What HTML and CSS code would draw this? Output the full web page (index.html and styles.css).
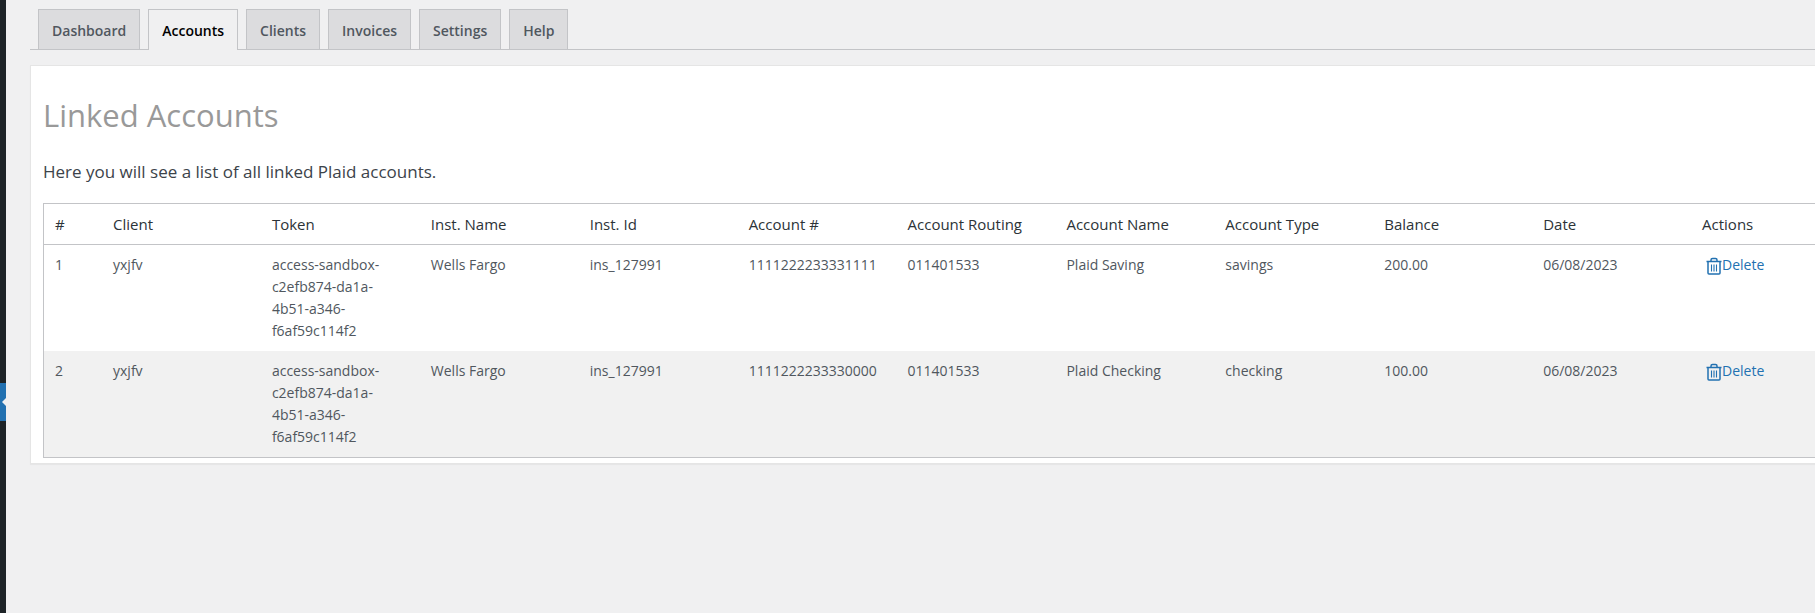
FILE: index.html
```html
<!DOCTYPE html>
<html lang="en">
<head>
<meta charset="utf-8">
<title>Linked Accounts</title>
<link rel="stylesheet" href="styles.css">
</head>
<body>
<svg class="sprite" aria-hidden="true">
  <symbol id="trash" viewBox="0 0 16 18">
    <path d="M0.5 4.5h15M5 4.5V3q0-1.500 1.500-1.500h3q1.500 0 1.500 1.500v1.500M2 4.500V16q0 1 1 1h10q1 0 1-1V4.500" fill="none" stroke="currentColor" stroke-width="1.500"/>
    <path d="M5.500 7.500v7M8 7.500v7M10.500 7.500v7" fill="none" stroke="currentColor" stroke-width="1.100"/>
  </symbol>
</svg>
<div class="app">
  <aside class="menu"><div class="menu-current"></div></aside>
  <main class="content">
    <nav class="tabs">
      <a class="tab" href="#">Dashboard</a>
      <a class="tab tab-active" href="#" aria-current="page">Accounts</a>
      <a class="tab" href="#">Clients</a>
      <a class="tab" href="#">Invoices</a>
      <a class="tab" href="#">Settings</a>
      <a class="tab" href="#">Help</a>
    </nav>
    <section class="panel">
      <h1 class="title">Linked Accounts</h1>
      <p class="intro">Here you will see a list of all linked Plaid accounts.</p>
      <table class="accounts">
        <thead>
          <tr>
            <th class="col-num">#</th><th>Client</th><th>Token</th><th>Inst. Name</th><th>Inst. Id</th><th>Account #</th><th>Account Routing</th><th>Account Name</th><th>Account Type</th><th>Balance</th><th>Date</th><th>Actions</th>
          </tr>
        </thead>
        <tbody>
          <tr>
            <td>1</td><td>yxjfv</td><td>access-sandbox-c2efb874-da1a-4b51-a346-f6af59c114f2</td><td>Wells Fargo</td><td>ins_127991</td><td>1111222233331111</td><td>011401533</td><td>Plaid Saving</td><td>savings</td><td>200.00</td><td>06/08/2023</td>
            <td><a class="delete" href="#"><svg class="icon" aria-hidden="true"><use href="#trash"/></svg>Delete</a></td>
          </tr>
          <tr>
            <td>2</td><td>yxjfv</td><td>access-sandbox-c2efb874-da1a-4b51-a346-f6af59c114f2</td><td>Wells Fargo</td><td>ins_127991</td><td>1111222233330000</td><td>011401533</td><td>Plaid Checking</td><td>checking</td><td>100.00</td><td>06/08/2023</td>
            <td><a class="delete" href="#"><svg class="icon" aria-hidden="true"><use href="#trash"/></svg>Delete</a></td>
          </tr>
        </tbody>
      </table>
    </section>
  </main>
</div>
</body>
</html>
```
FILE: styles.css
```css
* { box-sizing: border-box; }
body {
  margin: 0;
  background: #f0f0f1;
  color: #3c434a;
  font: 14px/22px "Segoe UI", "Open Sans", "Noto Sans", sans-serif;
  overflow-x: hidden;
}
.sprite { display: none; }
.app { display: flex; min-height: 100vh; }
.menu { flex: none; width: 6px; padding-top: 383px; background: #1d2327; }
.menu-current {
  display: flex;
  align-items: center;
  justify-content: flex-end;
  height: 38px;
  background: #2271b1;
}
.menu-current::after {
  content: "";
  border: 4px solid transparent;
  border-left-width: 0;
  border-right-color: #f0f0f1;
}
/* the content area is wider than the window and runs past its right edge */
.content { flex: 1; min-width: 0; margin: 0 -49px 0 24px; }
.tabs {
  display: flex;
  gap: 8px;
  padding: 9px 8px 0;
  border-bottom: 1px solid #c3c4c7;
}
.tab {
  padding: 9px 13px 7px;
  border: 1px solid #c3c4c7;
  border-bottom: 0;
  background: #dcdcde;
  color: #50575e;
  font-weight: 600;
  line-height: 23px;
  text-decoration: none;
}
.tab-active {
  margin-bottom: -1px;
  background: #f0f0f1;
  color: #000;
}
.panel {
  margin-top: 15px;
  padding: 0 12px 5px;
  border: 1px solid #e5e5e5;
  background: #fff;
  box-shadow: 0 1px 1px rgba(0, 0, 0, 0.04);
}
.title {
  margin: 0;
  padding: 27px 0 25px;
  color: #999;
  font-size: 31px;
  font-weight: 400;
  line-height: 44px;
}
.intro { margin: 0 0 21px; font-size: 17px; line-height: 20px; }
.accounts {
  width: 100%;
  table-layout: fixed;
  border: 1px solid #c3c4c7;
  border-spacing: 0;
}
.accounts th {
  padding: 9px 11px;
  border-bottom: 1px solid #c3c4c7;
  color: #2c3338;
  font-size: 15px;
  font-weight: 400;
  text-align: left;
}
.accounts .col-num { width: 58px; }
.accounts td {
  padding: 9px 11px;
  color: #50575e;
  vertical-align: top;
}
.accounts tbody tr:nth-child(even) { background: #f1f1f1; }
.delete { display: flex; padding-left: 4px; color: #2271b1; text-decoration: none; }
.icon { width: 16px; height: 18px; margin-top: 3px; }
```
